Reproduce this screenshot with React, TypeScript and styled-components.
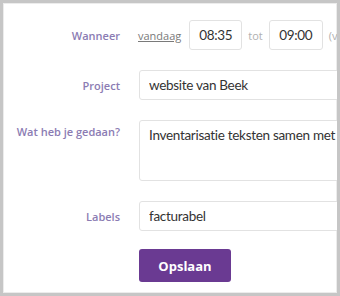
import React from "react";
import styled, { createGlobalStyle } from "styled-components";

const GlobalStyle = createGlobalStyle`
  body {
    margin: 0;
    background: #ffffff;
    font-family: "Open Sans", "Liberation Sans", sans-serif;
  }
`;

const Frame = styled.div`
  width: 340px;
  height: 296px;
  box-sizing: border-box;
  border: 3px solid #c6c6c6;
  box-shadow: inset 0 0 0 1px #ececec;
  overflow: hidden;
  padding-top: 17px;
`;

const Form = styled.form`
  display: grid;
  grid-template-columns: 117px 260px;
  column-gap: 19px;
  row-gap: 20px;
  align-items: center;
`;

const Label = styled.label<{ $top?: boolean }>`
  justify-self: end;
  align-self: ${(p) => (p.$top ? "start" : "center")};
  padding-top: ${(p) => (p.$top ? "4px" : "0")};
  font-size: 11px;
  font-weight: 600;
  color: #8b7cb3;
  white-space: nowrap;
`;

const TimeRow = styled.div`
  display: flex;
  align-items: center;
  white-space: nowrap;
`;

const TodayLink = styled.a`
  font-size: 11px;
  color: #7a7a7a;
  text-decoration: underline;
  margin-right: 8px;
  margin-left: -1px;
`;

const Muted = styled.span`
  font-size: 11px;
  color: #b0b0b0;
  margin: 0 6px;
`;

const Field = styled.input<{ $w?: number }>`
  box-sizing: border-box;
  width: ${(p) => (p.$w ? `${p.$w}px` : "240px")};
  height: 30px;
  padding: 0 ${(p) => (p.$w ? "0" : "9px")};
  text-align: ${(p) => (p.$w ? "center" : "left")};
  border: 1px solid #e2e2e2;
  border-radius: 3px;
  font-family: Lato, "Open Sans", sans-serif;
  font-size: 13.5px;
  letter-spacing: -0.3px;
  color: #333333;
  background: #ffffff;
  outline: none;
`;

const TextArea = styled.textarea`
  box-sizing: border-box;
  width: 240px;
  height: 61px;
  padding: 4px 9px;
  border: 1px solid #e2e2e2;
  border-radius: 3px;
  font-family: Lato, "Open Sans", sans-serif;
  font-size: 13.5px;
  letter-spacing: -0.3px;
  line-height: 20px;
  color: #333333;
  resize: none;
  overflow: hidden;
  outline: none;
  white-space: nowrap;
`;

const SaveButton = styled.button`
  grid-column: 2;
  justify-self: start;
  margin-top: -2px;
  width: 92px;
  height: 33px;
  border: none;
  border-radius: 3px;
  background: #6a3a92;
  color: #ffffff;
  font-family: inherit;
  font-size: 13px;
  font-weight: 700;
`;

export default function App() {
  return (
    <>
      <GlobalStyle />
      <Frame>
        <Form onSubmit={(e) => e.preventDefault()}>
          <Label>Wanneer</Label>
          <TimeRow>
            <TodayLink href="#">vandaag</TodayLink>
            <Field $w={53} defaultValue="08:35" />
            <Muted>tot</Muted>
            <Field $w={54} defaultValue="09:00" />
            <Muted>(vandaag)</Muted>
          </TimeRow>

          <Label>Project</Label>
          <Field defaultValue="website van Beek" />

          <Label $top>Wat heb je gedaan?</Label>
          <TextArea defaultValue="Inventarisatie teksten samen met klant" />

          <Label>Labels</Label>
          <Field defaultValue="facturabel" />

          <SaveButton type="submit">Opslaan</SaveButton>
        </Form>
      </Frame>
    </>
  );
}
